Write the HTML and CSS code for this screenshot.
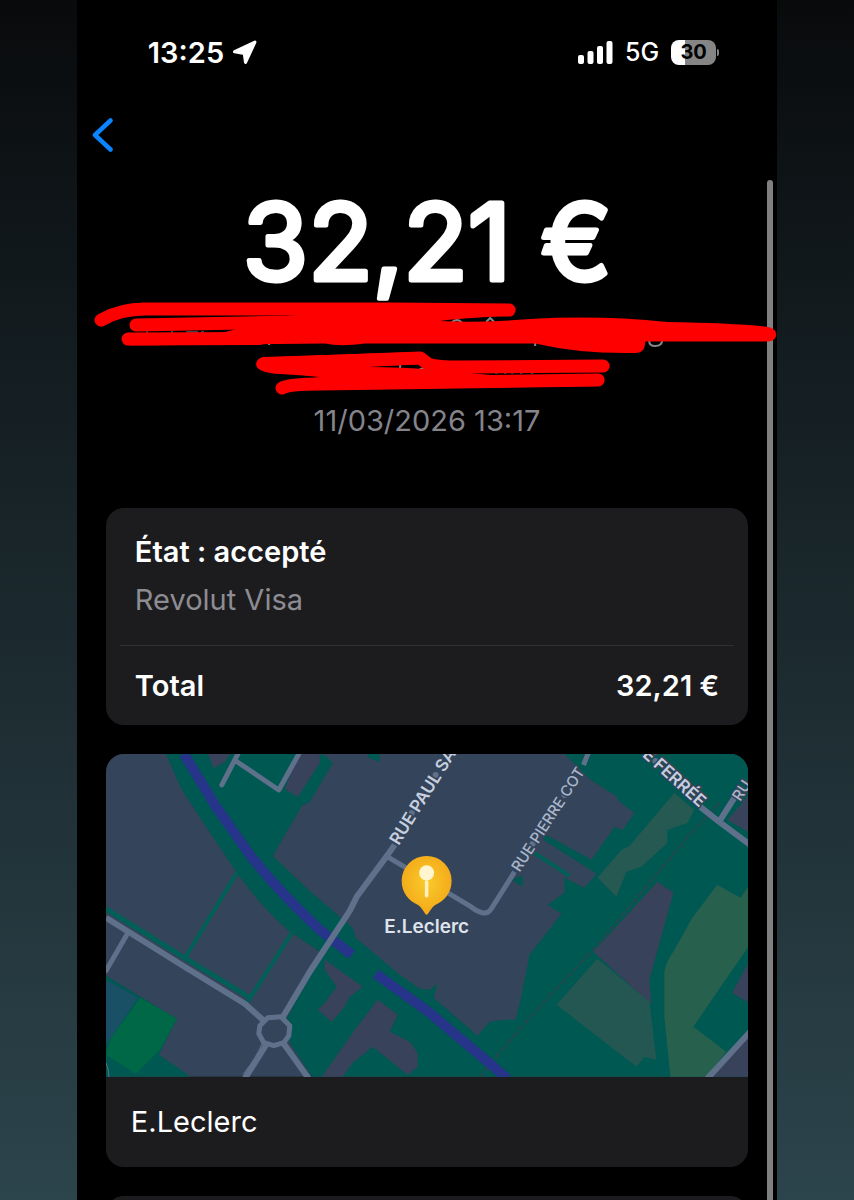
FILE: index.html
```html
<!DOCTYPE html>
<html lang="fr">
<head>
<meta charset="utf-8">
<meta name="viewport" content="width=device-width, initial-scale=1">
<title>Transaction</title>
<link rel="stylesheet" href="styles.css">
</head>
<body>
<div class="phone">
  <header class="status">
    <div class="status-left">
      <span class="time">13:25</span>
      <svg class="locate" viewBox="0 0 24 24" aria-hidden="true"><path d="M22 2 13 21.500 11.800 12.900 2.500 11.300Z" fill="#fff" stroke="#fff" stroke-width="3" stroke-linejoin="round"/></svg>
    </div>
    <div class="status-right">
      <svg class="signal" viewBox="0 0 35 23" aria-hidden="true" fill="#fff"><rect x="0" y="14" width="6" height="9" rx="2"/><rect x="9.500" y="10" width="6" height="13" rx="2"/><rect x="19" y="5" width="6" height="18" rx="2"/><rect x="28.500" y="0" width="6" height="23" rx="2"/></svg>
      <span class="network">5G</span>
      <span class="battery"><span class="battery-body">30</span><span class="battery-nub"></span></span>
    </div>
  </header>

  <nav class="nav">
    <button class="back" type="button" aria-label="Retour">
      <svg viewBox="0 0 22 34" aria-hidden="true"><path d="M18.500 2.500 3 17 18.500 31.500" fill="none" stroke="#0a84ff" stroke-width="4.500" stroke-linecap="round" stroke-linejoin="round"/></svg>
    </button>
  </nav>

  <main>
    <section class="hero">
      <h1 class="amount"><svg viewBox="0 0 700 114" role="img"><text x="350" y="96" text-anchor="middle">32,21 €</text></svg></h1>
      <svg class="scribble" viewBox="77 298 700 100" aria-hidden="true">
        <g fill="none" stroke="#85848b" stroke-width="2">
          <path d="M451 323q6-6 11 0M486 322l4-4 4 4M535 342v4M269 341v4M649 341q0 5 6 5 7 0 7-6M400 365v6M405 370h5M418 371q4-5 8 0"/>
          <path d="M146 332h2M171 332h2M186 332h12M201 332h3M495 373h2M504 373h2M511 373h2M520 373h2M531 373h2" stroke-width="1"/>
        </g>
        <g fill="none" stroke="#f00" stroke-width="13" stroke-linecap="round" stroke-linejoin="round">
          <path d="M101 320Q120 309 145 309H390L509 310"/>
          <path d="M136 325 350 321"/>
          <path d="M128 339 260 338.500"/>
          <path d="M263 364 420 358 428 364Q436 367 460 367L603 366"/>
          <path d="M282 388Q290 384 320 384L598 380"/>
        </g>
        <g fill="#f00">
          <path d="M287 316 430 305 509 316Q460 318 440 321 480 323 530 319 600 315 667 322 730 323 765 326.500 776 328 776 334 776 341 768 341.500H645Q645 353 635 353 580 354 535 343.500H365Q340 347 325 343.500L128 345.500 225 332Z"/>
          <path d="M263 357Q256 359 256 365 258 373 280 374 300 375 320 377 300 378 320 390L598 386 440 370Q400 367 367 367L422 364V352Z"/>
        </g>
      </svg>
      <p class="date">11/03/2026 13:17</p>
    </section>

    <section class="card summary">
      <div class="state">
        <h2 class="strong">État : accepté</h2>
        <p class="muted">Revolut Visa</p>
      </div>
      <div class="total strong"><span>Total</span><span>32,21 €</span></div>
    </section>

    <section class="card place">
      <svg class="map" viewBox="106 754 643 323" preserveAspectRatio="xMidYMid slice" role="img" aria-label="Plan">
        <rect x="106" y="754" width="643" height="323" fill="#34445a"/>
        <g fill="#005852">
          <path d="M166 754H320L326 756 333 763 310 802 302 806 273 856 312 893 353 928 356 938 400 975 420 989 431 990 438 983 434 998 478 1036 490 1022 505 1020 516 1020 522 995 530 955 562 914 548 905 551 903 565 893 565 878 585 888 597 874 544 840 545 834 592 860 615 827 623 830 635 813 618 800 618 797 590 779 565 754H749V1077H312L290 1043 287 1018 320 960V952L290 932Q262 908 237 873L205 825 182 790Z"/>
          <path d="M106 976 177 1019 159 1055 191 1077H106Z"/>
          <path d="M368 754H380V762L369 758ZM512 880 523 876V887Z"/>
        </g>
        <g fill="none" stroke="#005f57" stroke-width="5"><path d="M106 909 183 957 250 998"/><path d="M237 873 184 960M292 933 248 1002M530 850 570 876" stroke-width="4"/></g>
        <g fill="#38425b">
          <path d="M208 754H230L225 762 214 768ZM298 754H320V763L298 797 285 789ZM325 960 363 987 350 997 345 1007 332 1022 318 1010 325 1003 337 987 325 970ZM378 1000 398 1015 390 1032 410 1042 418 1053V1067L408 1075 373 1047 353 1063 343 1077H322L353 1033ZM658 882 674 893 650 980 652 1005 594 952ZM749 963 733 993 749 1003ZM728 820 749 796V832ZM749 1030 712 1077H749Z"/>
        </g>
        <path d="M106 980 138 998 110 1040 106 1045Z" fill="#1a5066"/>
        <path d="M140 998 177 1019 160 1050 136 1074 106 1055 110 1040Z" fill="#006846"/>
        <path d="M675 793 695 810 688 823 668 830V843L642 867 627 872 617 897 598 878 622 850 630 846Z" fill="#255951"/>
        <path d="M598 959 650 1002 657 1060 645 1057 637 1067 557 1005Z" fill="#245751"/>
        <path d="M718 885 741 898 749 887V947L694 1027 727 1052 707 1077H671L665 1017V972Q667 961 674 952L693 918Z" fill="#28604e"/>
        <path d="M720 803 690 835 600 943 530 1018 480 1077" fill="none" stroke="#25494f" stroke-width="2" stroke-dasharray="7 2"/>
        <g fill="none" stroke="#26348a" stroke-width="10"><path d="M184 754 215 805 250 855Q280 893 320 930L352 955M376 974 430 1013 508 1079"/></g>
        <g fill="none" stroke="#5f708b" stroke-width="6" stroke-linejoin="round">
          <path d="M106 918 183 966 245 1004 264 1021"/>
          <path d="M282 1019 310 972 350 911 357 897 388 855 395 845"/>
          <path d="M388 857 470 906Q485 918 491 910L515 872M584 765 590 750" stroke-width="5"/>
          <path d="M267 1044 245 1079M284 1044 309 1079"/>
          <path d="M128 933 106 971M238 754 222 785M236 761 279 790 299 754" stroke-width="5" stroke-linecap="round"/>
          <path d="M701 807 720 822 751 845M721 820 735 798M751 1032 708 1079"/>
          <path d="M268 1018 281 1017 290 1026 289 1036 284 1043 274 1046 264 1043 259 1034 260 1026Z" fill="#34445a" stroke-width="5"/>
          <path d="M262 1044Q258 1056 243 1075M106 1063Q109 1070 109 1078" stroke-width="1"/>
        </g>
        <g fill="#5f708b"><circle cx="412" cy="813" r="3"/><circle cx="436" cy="775" r="3"/><circle cx="533" cy="844" r="3"/><circle cx="565" cy="795" r="3"/><circle cx="656" cy="761" r="3"/></g>
        <g class="street">
          <text transform="translate(399 846) rotate(-58)">RUE PAUL SA</text>
          <text class="street-minor" transform="translate(520 873) rotate(-57)">RUE PIERRE COT</text>
          <text transform="translate(700 808) rotate(42)" text-anchor="end">E FERRÉE</text>
          <text class="street-minor" transform="translate(741 802) rotate(-57)">RU</text>
        </g>
        <defs><radialGradient id="gold" cx=".5" cy=".45" r=".6"><stop offset="0" stop-color="#f8cb2c"/><stop offset="1" stop-color="#f4a516"/></radialGradient></defs>
        <path d="M427 856A25 25 0 0 1 452 881C452 893 445 901 436 905 431 908 429 915 427 915S423 908 418 905C409 901 402 893 402 881A25 25 0 0 1 427 856Z" fill="url(#gold)"/>
        <circle cx="427" cy="873" r="7.500" fill="#fff6cf"/><path d="M427 882V896" stroke="#fff0c0" stroke-width="3.500" stroke-linecap="round"/>
        <text class="pin-label" x="427" y="933" text-anchor="middle">E.Leclerc</text>
      </svg>
      <p class="place-name">E.Leclerc</p>
    </section>

    <section class="card next"></section>
  </main>
  <div class="scrollbar" aria-hidden="true"></div>
</div>
</body>
</html>
```
FILE: styles.css
```css
* { box-sizing: border-box; }
body {
  margin: 0;
  background: linear-gradient(#090a0c 0, #10171a 20%, #2c444c 100%) fixed;
  font-family: Inter, "Liberation Sans", sans-serif;
  color: #fff;
}
h1, h2, p { margin: 0; }
.phone {
  position: relative;
  height: 100vh;
  margin: 0 9%;
  overflow: hidden;
  background: #000;
}
.status {
  display: flex;
  justify-content: space-between;
  align-items: center;
  height: 104px;
  padding: 0 58px 0 71px;
}
.status-left, .status-right { display: flex; align-items: center; }
.status-left { gap: 8px; }
.status-right { gap: 12px; }
.time { font-size: 29px; font-weight: 600; }
.locate { width: 25px; height: 25px; }
.signal { width: 35px; height: 23px; }
.network { font-size: 25px; font-weight: 500; }
.battery { display: flex; align-items: center; gap: 1px; }
.battery-body {
  width: 45px;
  height: 25px;
  border-radius: 8px;
  background: linear-gradient(90deg, #fff 31%, #858585 31%);
  color: #000;
  font-size: 20px;
  font-weight: 700;
  line-height: 25px;
  text-align: center;
}
.battery-nub { width: 2px; height: 7px; border-radius: 0 2px 2px 0; background: #858585; }
.nav { height: 80px; padding: 14px 15px; }
.back { display: block; padding: 0; border: 0; background: none; }
.back svg { display: block; width: 22px; height: 34px; }
.amount svg { display: block; width: 100%; overflow: visible; }
.amount text {
  font-size: 106px;
  font-weight: 400;
  font-variation-settings: "opsz" 14;
  fill: #fff;
  stroke: #fff;
  stroke-width: 5px;
  stroke-linejoin: round;
}
.scribble { position: relative; z-index: 2; display: block; width: 100%; }
.date {
  margin-bottom: 67px;
  padding-top: 3px;
  color: #85848b;
  font-size: 29px;
  line-height: 40px;
  text-align: center;
}
.card {
  margin: 0 29px 29px;
  overflow: hidden;
  border-radius: 18px;
  background: #1c1c1e;
}
.strong { font-size: 29px; font-weight: 600; line-height: 40px; }
.state { margin: 0 14px; padding: 24px 15px 25px; border-bottom: 1px solid #303033; }
.muted { padding-top: 8px; color: #8d8c93; font-size: 29px; line-height: 40px; }
.total { display: flex; justify-content: space-between; padding: 20px 29px 19px; }
.map { display: block; width: 100%; }
.street text {
  font-size: 17px;
  font-weight: 600;
  fill: #c6cfdf;
  stroke: #34445a;
  stroke-width: 3px;
  stroke-linejoin: round;
  paint-order: stroke;
}
.street .street-minor { font-size: 15px; font-weight: 500; fill: #aab6ca; }
.pin-label { font-size: 19px; font-weight: 600; fill: #dfe3ec; }
.place-name { padding: 25px; font-size: 29px; line-height: 40px; }
.next { height: 120px; }
.scrollbar {
  position: absolute;
  top: 180px;
  right: 4px;
  bottom: 0;
  width: 6px;
  border-radius: 3px 3px 0 0;
  background: #808080;
}
```
